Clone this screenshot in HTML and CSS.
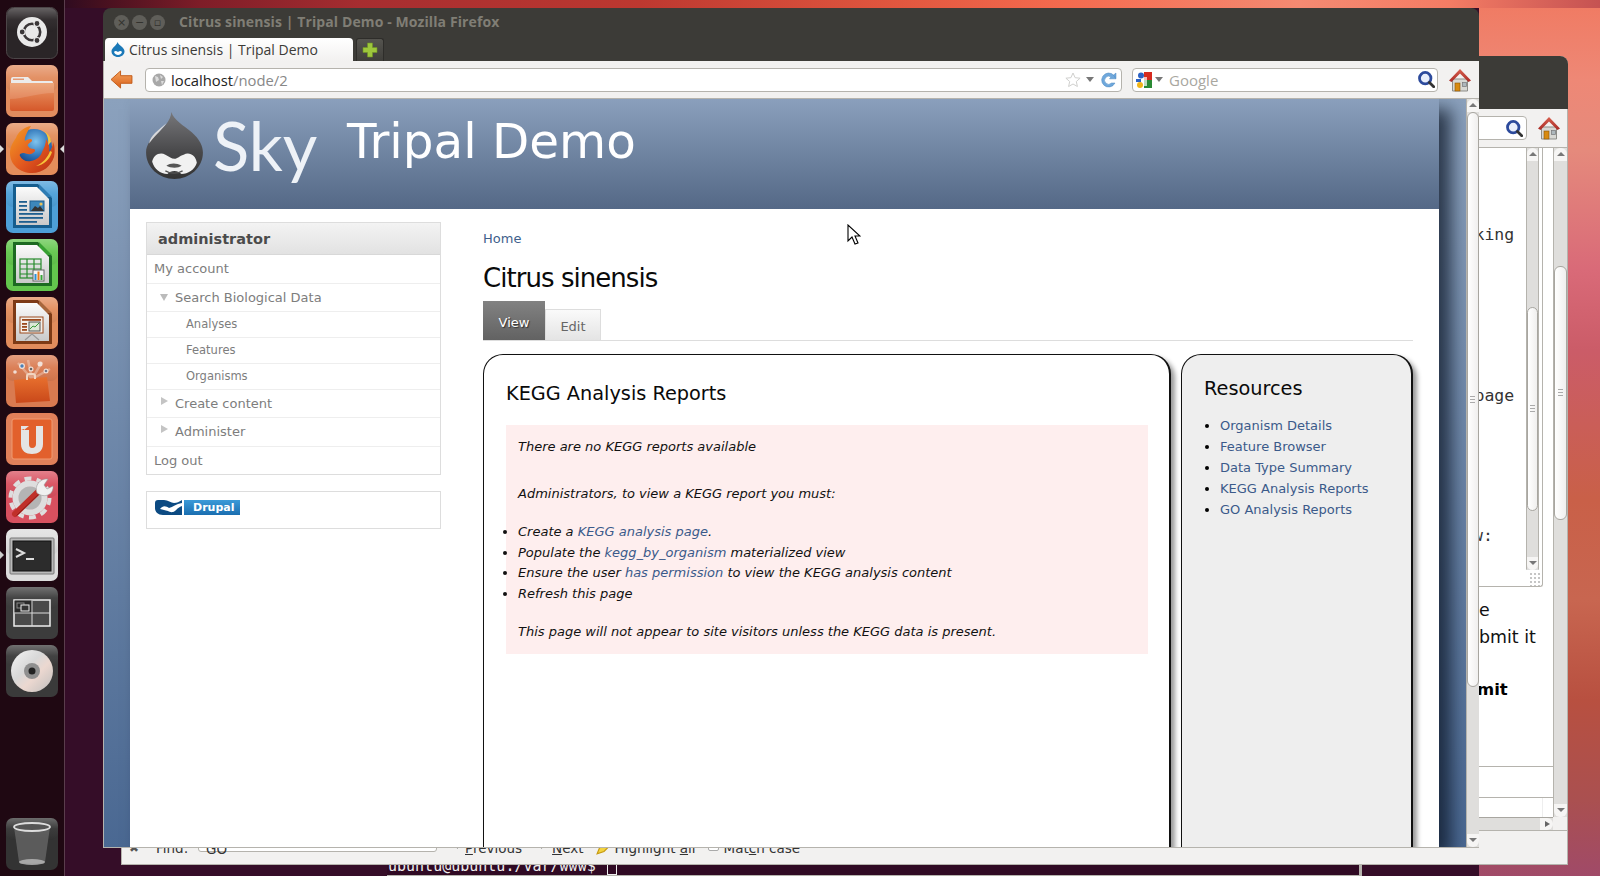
FILE: index.html
```html
<!DOCTYPE html>
<html lang="en">
<head>
<meta charset="utf-8">
<title>Citrus sinensis | Tripal Demo</title>
<link rel="stylesheet" href="styles.css">
</head>
<body>
<svg class="defs" width="0" height="0" aria-hidden="true">
  <defs>
    <linearGradient id="glass" x1="0" y1="0" x2="0" y2="1"><stop offset="0" stop-color="#fff" stop-opacity=".28"/><stop offset=".5" stop-color="#fff" stop-opacity=".04"/><stop offset="1" stop-color="#000" stop-opacity=".06"/></linearGradient>
    <linearGradient id="dropfill" x1="0" y1="0" x2="0" y2="1"><stop offset="0" stop-color="#77777a"/><stop offset=".6" stop-color="#48484a"/><stop offset="1" stop-color="#333"/></linearGradient>
    <radialGradient id="globe" cx=".55" cy=".35" r=".7"><stop offset="0" stop-color="#7fc4ee"/><stop offset=".6" stop-color="#2a6fb4"/><stop offset="1" stop-color="#153c7c"/></radialGradient>
    <linearGradient id="fox" x1="0" y1="0" x2="1" y2="1"><stop offset="0" stop-color="#f4a025"/><stop offset=".55" stop-color="#e2571f"/><stop offset="1" stop-color="#b82c12"/></linearGradient>
    <linearGradient id="folder" x1="0" y1="0" x2="0" y2="1"><stop offset="0" stop-color="#eb9a68"/><stop offset="1" stop-color="#d5582a"/></linearGradient>
    <linearGradient id="page" x1="0" y1="0" x2="0" y2="1"><stop offset="0" stop-color="#fbfbfb"/><stop offset="1" stop-color="#c9c9c9"/></linearGradient>
    <linearGradient id="disc" x1="0" y1="0" x2="1" y2="1"><stop offset="0" stop-color="#f5f5f5"/><stop offset=".4" stop-color="#d8d8d8"/><stop offset=".6" stop-color="#ecd8d0"/><stop offset="1" stop-color="#bdbdbd"/></linearGradient>
    <linearGradient id="arrowfill" x1="0" y1="0" x2="0" y2="1"><stop offset="0" stop-color="#f5a560"/><stop offset="1" stop-color="#d95f18"/></linearGradient>
    <linearGradient id="roof" x1="0" y1="0" x2="0" y2="1"><stop offset="0" stop-color="#d8604f"/><stop offset="1" stop-color="#a82a25"/></linearGradient>
    <linearGradient id="bag" x1="0" y1="0" x2="0" y2="1"><stop offset="0" stop-color="#e8702e"/><stop offset="1" stop-color="#c9481a"/></linearGradient>
    <symbol id="magnifier" viewBox="0 0 16 16">
      <circle cx="6.8" cy="6.8" r="5.4" fill="#e8eefb" stroke="#2c4a9c" stroke-width="2.6"/>
      <path d="M10.8 10.8l4 4" stroke="#333" stroke-width="2.6" stroke-linecap="round"/>
    </symbol>
    <symbol id="home" viewBox="0 0 24 24">
      <path d="M4.5 11h15v12h-15z" fill="#d8d8d4" stroke="#8d8d88"/>
      <path d="M1 12.5L12 1l11 11.5-2.5 1.5L12 5.5 3.500 14z" fill="url(#roof)"/>
      <rect x="7" y="15" width="5" height="8" fill="#d88a10" stroke="#8a5507" stroke-width=".6"/>
      <rect x="14.500" y="14.500" width="4" height="4" fill="#aeb8bd" stroke="#77777a" stroke-width=".7"/>
    </symbol>
  </defs>
</svg>

<nav class="launcher" aria-label="Launcher">
  <div class="tile">
    <svg viewBox="0 0 52 52"><rect x=".5" y=".5" width="51" height="51" rx="7" fill="#2a2527" stroke="#4c4648"/><rect x="1" y="1" width="50" height="24" rx="7" fill="url(#glass)"/><circle cx="26" cy="25" r="15" fill="#e9e9e9"/><circle cx="26" cy="25" r="8.2" fill="none" stroke="#3a3638" stroke-width="2.6"/><g fill="#3a3638" stroke="#e9e9e9" stroke-width="1.2"><circle cx="16.200" cy="25" r="3"/><circle cx="31" cy="16.500" r="3"/><circle cx="31" cy="33.500" r="3"/></g></svg>
  </div>
  <div class="tile">
    <svg viewBox="0 0 52 52"><rect width="52" height="52" rx="7" fill="#e28c5e"/><rect width="52" height="26" rx="7" fill="url(#glass)"/><path d="M5 14a2 2 0 0 1 2-2h15l4 4h20a2 2 0 0 1 1 2v6H5z" fill="#ececec"/><path d="M7 13.500h11v1.500H7z" fill="#e59a75"/><path d="M4 18h44v26a2 2 0 0 1-2 2H6a2 2 0 0 1-2-2z" fill="url(#folder)"/><path d="M4 18h44v10C30 28 18 34 4 34z" fill="#fff" opacity=".14"/></svg>
  </div>
  <div class="tile tile-pip">
    <svg viewBox="0 0 52 52"><rect width="52" height="52" rx="7" fill="#e48d5b"/><rect width="52" height="26" rx="7" fill="url(#glass)"/><circle cx="28" cy="24" r="18" fill="url(#globe)"/><path d="M25 3c-7 1-13 6-15 12-3 4-6 9-6 15 0 12 10 20 22 20 11 0 19-7 22-16 1-5 1-11-1-15 0 4-2 8-4 10 1-4 0-9-3-13 0 5-2 9-4 13-1 4-5 8-11 9-5 1-9-1-11-5-1-2 1-3 4-3 3 1 6 2 9 0 2-1 3-3 1-4-3 0-5-1-6-3-1-1 1-3 3-4 2-1 1-3-1-3-2 0-4 1-5 2-1-3 2-9 6-15z" fill="url(#fox)"/><path d="M38 8c3 3 5 8 4 14l3-3c0-4-2-8-7-11zM44 28c-2 6-7 12-14 15 8-1 14-7 16-14z" fill="#f6c43a"/></svg>
  </div>
  <div class="tile">
    <svg viewBox="0 0 52 52"><rect width="52" height="52" rx="7" fill="#4d9fd8"/><rect width="52" height="26" rx="7" fill="url(#glass)"/><path d="M7 3h25l14 14v30H7z" fill="#155d8e"/><path d="M33 3l13 13H33z" fill="#2f7cb3"/><path d="M10 6h21l12 12v26H10z" fill="url(#page)"/><g fill="#1e5f8f"><rect x="13" y="20" width="8" height="1.800"/><rect x="13" y="24" width="8" height="1.800"/><rect x="13" y="28" width="8" height="1.800"/><rect x="13" y="32" width="24" height="1.800"/><rect x="13" y="36" width="24" height="1.800"/><rect x="13" y="40" width="18" height="1.800"/></g><rect x="24" y="20" width="14" height="10" fill="#3d87bb" stroke="#1e5f8f"/><path d="M25 30l4-5 3 2 2-2 4 5z" fill="#333"/><circle cx="35" cy="23" r="1.600" fill="#e8c25a"/></svg>
  </div>
  <div class="tile">
    <svg viewBox="0 0 52 52"><rect width="52" height="52" rx="7" fill="#63c64d"/><rect width="52" height="26" rx="7" fill="url(#glass)"/><path d="M7 3h25l14 14v30H7z" fill="#1d6a22"/><path d="M33 3l13 13H33z" fill="#37a032"/><path d="M10 6h21l12 12v26H10z" fill="url(#page)"/><g fill="none" stroke="#258a2a" stroke-width="1.200"><rect x="14" y="20" width="21" height="19"/><path d="M14 25h21M14 30h21M14 35h21M21 20v19M28 20v19"/></g><rect x="27" y="31" width="11" height="11" fill="#f4f4f4" stroke="#666"/><rect x="28.500" y="35" width="2" height="6" fill="#2d8fd5"/><rect x="31.500" y="32.500" width="2" height="8.500" fill="#e87a1d"/><rect x="34.500" y="36" width="2" height="5" fill="#3aa63a"/></svg>
  </div>
  <div class="tile">
    <svg viewBox="0 0 52 52"><rect width="52" height="52" rx="7" fill="#e28c5c"/><rect width="52" height="26" rx="7" fill="url(#glass)"/><path d="M7 3h25l14 14v30H7z" fill="#7d3a16"/><path d="M33 3l13 13H33z" fill="#a8673d"/><path d="M10 6h21l12 12v26H10z" fill="url(#page)"/><rect x="14" y="20" width="23" height="16" fill="#f4f0ea" stroke="#9c4a1e"/><rect x="16" y="22" width="19" height="1.800" fill="#9c4a1e"/><g fill="#9c4a1e"><rect x="16" y="26" width="5" height="1.800"/><rect x="16" y="29" width="5" height="1.800"/><rect x="16" y="32" width="5" height="1.800"/></g><rect x="23" y="25" width="11" height="9" fill="#dde8d8" stroke="#555"/><path d="M24 32l3-3 2 1 4-4" fill="none" stroke="#3a9a3a"/><path d="M19 43l7-6 7 6" fill="none" stroke="#999" stroke-width="1.200"/></svg>
  </div>
  <div class="tile">
    <svg viewBox="0 0 52 52"><rect width="52" height="52" rx="7" fill="#d97a50"/><rect width="52" height="26" rx="7" fill="url(#glass)"/><path d="M26 24L12 8M26 24L22 5M26 24l10-17M26 24L44 14" stroke="#fbeee6" stroke-width="2.500" opacity=".35"/><g fill="#f4e9e2" opacity=".9"><circle cx="16" cy="11" r="3"/><circle cx="25" cy="14" r="2.500"/><circle cx="34" cy="9" r="2.500"/><circle cx="40" cy="16" r="2.500"/><circle cx="9" cy="17" r="1.800"/></g><circle cx="16" cy="11" r="1.700" fill="#4a80b8"/><circle cx="25" cy="14" r="1.300" fill="#666"/><circle cx="40" cy="16" r="1.300" fill="#778"/><path d="M8 25l33-3 3 24-34 2z" fill="url(#bag)"/><path d="M21 25v-4q0-2 2-2h4q2 0 2 2v3" fill="none" stroke="#f2d4bf" stroke-width="2"/></svg>
  </div>
  <div class="tile">
    <svg viewBox="0 0 52 52"><rect width="52" height="52" rx="7" fill="#e0805a"/><rect x="6" y="6" width="40" height="40" rx="2" fill="#e2602c" stroke="#f09a70"/><path d="M15 13h8l-5 4v-1l-3 1zM15 17h8v14q0 4 3 4c3 0 4-2 4-4V13h7v18c0 7-5 10-11 10s-11-3-11-10z" fill="#e4e4e4"/></svg>
  </div>
  <div class="tile">
    <svg viewBox="0 0 52 52"><rect width="52" height="52" rx="7" fill="#d8505f"/><rect width="52" height="26" rx="7" fill="url(#glass)"/><circle cx="24" cy="27" r="12" fill="#b4b4b4"/><circle cx="24" cy="27" r="14.500" fill="none" stroke="#dedede" stroke-width="6"/><circle cx="24" cy="27" r="19.500" fill="none" stroke="#dedede" stroke-width="4" stroke-dasharray="7 5.250"/><path d="M9 43L34 19" stroke="#c0302a" stroke-width="6" stroke-linecap="round"/><path d="M9 43L34 19" stroke="#8c1c18" stroke-width="1" transform="translate(1.500 1.500)"/><path d="M31 22c-3-7 3-15 11-14l-4 6 3 4 6-3c1 8-8 13-16 7" fill="#f0f0f0" stroke="#999" stroke-width=".6"/></svg>
  </div>
  <div class="tile tile-arrow">
    <svg viewBox="0 0 52 52"><rect width="52" height="52" rx="7" fill="#dcdcdc"/><rect width="52" height="26" rx="7" fill="url(#glass)"/><rect x="4" y="9" width="44" height="36" rx="1" fill="#b9b9b9" stroke="#777"/><rect x="7" y="12" width="38" height="30" fill="#2c2c2c" stroke="#111"/><path d="M10 20l8 4-8 4" fill="none" stroke="#ddd" stroke-width="2"/><rect x="20" y="29" width="8" height="2" fill="#ddd"/></svg>
  </div>
  <div class="tile">
    <svg viewBox="0 0 52 52"><rect width="52" height="52" rx="7" fill="#3c3c3c"/><rect width="52" height="22" rx="7" fill="url(#glass)"/><rect x="8" y="13" width="36" height="26" fill="#4a4a4a" stroke="#eee" stroke-width="1.500"/><rect x="8.500" y="13.500" width="18" height="13" fill="#2a2a2a"/><path d="M26 13v26M8 26h36" stroke="#ddd"/><rect x="11" y="16" width="7" height="5" fill="none" stroke="#888"/><rect x="15" y="18" width="8" height="6" fill="#333" stroke="#eee"/></svg>
  </div>
  <div class="tile">
    <svg viewBox="0 0 52 52"><rect width="52" height="52" rx="7" fill="#3a3a3a"/><rect width="52" height="22" rx="7" fill="url(#glass)"/><circle cx="26" cy="26" r="21" fill="url(#disc)"/><circle cx="26" cy="26" r="8" fill="#8f8f8f"/><circle cx="26" cy="26" r="3.500" fill="#222"/></svg>
  </div>
  <div class="tile tile-trash">
    <svg viewBox="0 0 52 52"><rect width="52" height="52" rx="7" fill="#333"/><rect width="52" height="22" rx="7" fill="url(#glass)"/><path d="M8 9l5 35c1 2 25 2 26 0l5-35z" fill="#6a6a6a" opacity=".75"/><ellipse cx="26" cy="9" rx="18" ry="4" fill="#555" stroke="#ddd" stroke-width="1.800"/><ellipse cx="26" cy="44" rx="13" ry="3" fill="#bbb" opacity=".8"/></svg>
  </div>
</nav>

<section class="terminal"><span class="term-text">ubuntu@ubuntu:/var/www$ </span><span class="term-cursor"></span></section>

<section class="win back">
  <div class="back-title"></div>
  <div class="toolbar back-toolbar">
    <div class="search back-search"><svg class="mag"><use href="#magnifier"/></svg></div>
    <svg class="home"><use href="#home"/></svg>
  </div>
  <div class="back-main">
    <div class="back-page">
      <div class="textarea">
        <div class="ta-lines">
          <p class="mono mono-king">king</p>
          <p class="mono mono-page">page</p>
          <p class="mono mono-w">w:</p>
        </div>
        <div class="ta-scroll">
          <div class="sb sb-ta">
            <div class="sb-btn up"></div><div class="sb-fill sb-ta-a"></div><div class="sb-thumb sb-ta-t"></div><div class="sb-fill sb-ta-b"></div><div class="sb-btn down"></div>
          </div>
          <div class="grip"></div>
        </div>
      </div>
      <p class="bp bp-e">e</p>
      <p class="bp bp-it">bmit it</p>
      <p class="bp bp-mit">mit</p>
      <div class="back-rule"></div>
      <div class="back-field"><div class="back-field-in"></div></div>
    </div>
    <div class="sb sb-back">
      <div class="sb-btn up"></div><div class="sb-fill sb-back-a"></div><div class="sb-thumb sb-back-t"></div><div class="sb-fill grow"></div><div class="sb-btn down"></div>
    </div>
  </div>
  <div class="hscroll"><div class="h-track"><div class="h-thumb"></div><div class="h-btn"></div></div><div class="h-corner"></div></div>
  <div class="findbar">
    <span class="find-x">✖</span>
    <span class="find-label">Find:</span>
    <span class="find-input">GO</span>
    <span class="find-item find-prev"><u>P</u>revious</span>
    <span class="find-item find-next"><u>N</u>ext</span>
    <svg class="find-hl" viewBox="0 0 14 14"><path d="M1 12l2-5 6-6 4 3-6 6z" fill="#f3d33f" stroke="#c79a10"/></svg>
    <span class="find-item find-all">Highlight <u>a</u>ll</span>
    <span class="find-check"></span>
    <span class="find-item">Mat<u>c</u>h case</span>
  </div>
</section>

<section class="win front">
  <header class="titlebar">
    <div class="wbtns"><span class="wbtn">×</span><span class="wbtn">−</span><span class="wbtn">▫</span></div>
    <span class="wtitle">Citrus sinensis | Tripal Demo - Mozilla Firefox</span>
  </header>
  <div class="tabstrip">
    <div class="tab">
      <svg class="favicon" viewBox="0 0 14 15"><path d="M6.500 0c.5 2 2.500 3 4 4.500 2 1.800 3 3.500 3 5 0 3-3 5.500-6.500 5.500S.5 12.500.5 9.500C.5 5.500 5.500 4 6.500 0z" fill="#1b79b8"/><path d="M3 10c1-1.500 2.500-1 4 0 1.500-1 3-1.500 4 0-.5 2-2.500 3-4 3s-3.500-1-4-3z" fill="#fff"/></svg>
      <span>Citrus sinensis | Tripal Demo</span>
    </div>
    <div class="newtab"><svg viewBox="0 0 16 16"><path d="M5.500 1h5v4.500H15v5h-4.500V15h-5v-4.500H1v-5h4.500z" fill="#9dc63c" stroke="#6f9422" stroke-width=".6"/></svg></div>
  </div>
  <div class="toolbar front-toolbar">
    <svg class="back-arrow" viewBox="0 0 24 20"><path d="M11 1L1 10l10 9v-5h12V6H11z" fill="url(#arrowfill)" stroke="#c25a17"/></svg>
    <div class="urlbar">
      <svg class="globe" viewBox="0 0 14 14"><circle cx="7" cy="7" r="6.500" fill="#a8a8a8"/><path d="M3 3l3 1 1 3-3 2zM8 2l3 2-2 2zM9 8l3 0-2 4z" fill="#dcdcdc"/></svg>
      <span class="url"><b>localhost</b>/node/2</span>
      <svg class="star" viewBox="0 0 16 16"><path d="M8 1l2.100 4.700 5 .5-3.800 3.300 1.100 5L8 12l-4.400 2.500 1.100-5L.9 6.200l5-.5z" fill="#fff" stroke="#d0d0ce"/></svg>
      <span class="dd"></span>
      <svg class="reload" viewBox="0 0 16 16"><path d="M14.500 6.500A7 7 0 1 0 14 11h-3.500A4 4 0 1 1 10 5L8.500 6.800H15V1l-2.500 2" fill="#6fa8dc" stroke="#4d88c0" stroke-width=".5"/></svg>
    </div>
    <div class="search front-search">
      <svg class="gicon" viewBox="0 0 16 16"><rect x="8" y="0" width="8" height="8" fill="#d62b20"/><rect x="8" y="8" width="8" height="8" fill="#2a8a34"/><circle cx="5" cy="3.500" r="3" fill="#2c62c4"/><circle cx="4" cy="13" r="3" fill="#f2b619"/><rect x="0" y="7" width="5" height="3" fill="#2c62c4"/><path d="M8 5h3v9H8z" fill="#fff" opacity=".7"/></svg>
      <span class="dd"></span>
      <span class="gtext">Google</span>
      <svg class="mag"><use href="#magnifier"/></svg>
    </div>
    <svg class="home"><use href="#home"/></svg>
  </div>

  <div class="viewport">
    <div class="bodybg">
      <div class="page">
        <header class="masthead">
          <svg class="droplet" viewBox="0 0 56 66"><path d="M25 0c2 8 12 13 20 20 8 7 11 14 11 20 0 15-13 26-28 26S0 55 0 40C0 23 23 18 25 0z" fill="url(#dropfill)"/><path d="M20 11C12 18 4 23 3 31c4-6 12-13 17-20z" fill="#d8d8da"/><path d="M6 49c1-6 7-10 13-7 4 2 6 4 9 4 3 0 5-3 9-4 6-3 12 1 13 8-2 7-9 11-15 11-3-2-4-3-7-3s-5 1-7 3c-7 0-13-5-15-12z" fill="#f1f1f1"/><path d="M20 53c4-3 10-3 15 0-2 1-4 2-7 2-3 0-6-1-8-2z" fill="#555"/><path d="M19 58c5 3 12 3 17 0" fill="none" stroke="#555" stroke-width="1.200"/></svg>
          <span class="sky">Sky</span>
          <h1 class="sitename">Tripal Demo</h1>
        </header>
        <div class="columns">
          <aside class="sidebar">
            <div class="sidebox">
              <h2 class="sidehead">administrator</h2>
              <ul class="menu">
                <li class="m0">My account</li>
                <li class="m1 open">Search Biological Data</li>
                <li class="m2">Analyses</li>
                <li class="m2">Features</li>
                <li class="m2">Organisms</li>
                <li class="m1 closed">Create content</li>
                <li class="m1 closed">Administer</li>
                <li class="m0 last">Log out</li>
              </ul>
            </div>
            <div class="sidebox powered">
              <div class="badge"><svg viewBox="0 0 27 15"><path d="M0 3q0-3 3-3h6c4 0 7 3 10 3 3 0 5-1 8-3v15H8C3 15 0 12 0 8z" fill="#0c4a82"/><path d="M5 9c3-4 6-3 9-1 4-1 7-4 13-5v3c-3 1-5 3-7 5-3 2-5 1-7 0-3-1-5-1-8-2z" fill="#fff"/></svg><span class="badge-text">Drupal</span></div>
            </div>
          </aside>
          <main class="main">
            <a class="crumb">Home</a>
            <h1 class="title">Citrus sinensis</h1>
            <div class="tabs"><a class="ptab active">View</a><a class="ptab">Edit</a></div>
            <div class="panels">
              <article class="panel panel-main">
                <h2>KEGG Analysis Reports</h2>
                <div class="notice">
                  <p class="n1">There are no KEGG reports available</p>
                  <p class="n2">Administrators, to view a KEGG report you must:</p>
                  <ul class="nlist">
                    <li>Create a <a>KEGG analysis page</a>.</li>
                    <li>Populate the <a>kegg_by_organism</a> materialized view</li>
                    <li>Ensure the user <a>has permission</a> to view the KEGG analysis content</li>
                    <li>Refresh this page</li>
                  </ul>
                  <p class="n3">This page will not appear to site visitors unless the KEGG data is present.</p>
                </div>
              </article>
              <aside class="panel panel-res">
                <h2>Resources</h2>
                <ul class="reslist">
                  <li><a>Organism Details</a></li>
                  <li><a>Feature Browser</a></li>
                  <li><a>Data Type Summary</a></li>
                  <li><a>KEGG Analysis Reports</a></li>
                  <li><a>GO Analysis Reports</a></li>
                </ul>
              </aside>
            </div>
          </main>
        </div>
      </div>
    </div>
    <div class="sb sb-front">
      <div class="sb-btn up"></div><div class="sb-thumb sb-front-t"></div><div class="sb-fill grow"></div><div class="sb-btn down"></div>
    </div>
  </div>
  <svg class="cursor" viewBox="0 0 14 21"><path d="M1 1v16l4-4 3 7 3-1-3-7h5z" fill="#fff" stroke="#000" stroke-width="1.100"/></svg>
</section>
</body>
</html>
```
FILE: styles.css
```css
* { box-sizing: border-box; }
html, body { margin: 0; height: 100%; }
body {
  width: 1600px; height: 876px; overflow: hidden; position: relative;
  font-family: "DejaVu Sans", sans-serif;
  background:
    linear-gradient(90deg, #2f0b20 64px, #45101f 100px, #7e1d28 200px, #a62d30 360px, #bd3830 640px, #e2573f 900px, #f46a4e 1060px, #f58a72 1300px, #f47c64 1450px, #c55252 1600px) 0 0 / 100% 8px no-repeat,
    linear-gradient(180deg, #f07a62 0, #ee8876 80px, #e58a7c 150px, #d96a78 270px, #cb5c68 350px, #c96048 500px, #c86650 600px, #b85040 700px, #aa5050 800px, #a04a68 876px) 1479px 0 / 121px 100% no-repeat,
    #350d28;
}
.defs { position: absolute; }
p, h1, h2, ul { margin: 0; padding: 0; }

/* launcher */
.launcher {
  position: absolute; left: 0; top: 0; bottom: 0; width: 65px;
  background: #1f0812; border-right: 1px solid #5a3d4c;
  display: flex; flex-direction: column; gap: 6px; padding: 7px 0 6px 6px;
}
.tile { width: 52px; height: 52px; flex: none; position: relative; }
.tile svg { display: block; width: 52px; height: 52px; }
.tile-trash { margin-top: auto; }
.tile-pip::before, .tile-pip::after, .tile-arrow::before {
  content: ""; position: absolute; top: 50%; margin-top: -4px;
  border: 4px solid transparent;
}
.tile-pip::before { left: -6px; border-left-color: #ddd; }
.tile-pip::after { right: -6px; border-right-color: #ddd; }
.tile-arrow::before { left: -6px; border-left-color: #ccc; }

/* terminal behind */
.terminal {
  position: absolute; left: 387px; top: 858px; width: 975px; height: 18px;
  background: #300a24; border-right: 3px solid #b5b3ad; border-bottom: 1px solid #b5b3ad;
  color: #eee; font: 15px/16px "DejaVu Sans Mono", monospace;
  padding-left: 1px; white-space: pre;
  display: flex; align-items: flex-start;
}
.term-cursor { width: 10px; height: 17px; border: 1px solid #eee; margin-left: 2px; }

/* windows */
.win { position: absolute; display: flex; flex-direction: column; border-radius: 8px 8px 0 0; }
.toolbar { background: #f2f1f0; display: flex; align-items: center; flex: none; border-bottom: 1px solid #b5b3ad; }

.back { left: 121px; top: 56px; width: 1447px; height: 809px; background: #f2f1f0; border: 1px solid #b5b3ad; border-top: 0; z-index: 1; }
.back-title { height: 53px; background: #3c3b37; flex: none; border-radius: 8px 8px 0 0; margin: 0 -1px; }
.back-toolbar { height: 39px; justify-content: flex-end; padding-right: 6px; gap: 10px; }
.back-search { width: 400px; height: 24px; }
.back-main { height: 669px; display: flex; flex: none; }
.back-page { flex: 1; background: #fff; display: flex; flex-direction: column; padding-left: 1352px; overflow: hidden; }
.textarea { height: 439px; margin-right: 10px; border-right: 1px solid #b5b3ad; border-bottom: 1px solid #b5b3ad; border-radius: 0 0 3px 0; display: flex; flex: none; }
.ta-lines { flex: 1; min-width: 0; }
.mono { font: 16.500px/22px "DejaVu Sans Mono", monospace; color: #333; white-space: nowrap; }
.mono-king { margin-top: 76px; margin-left: .5px; }
.mono-page { margin-top: 139px; margin-left: .5px; }
.mono-w { margin-top: 118px; margin-left: -1px; }
.ta-scroll { width: 16px; display: flex; flex-direction: column; flex: none; }
.grip { height: 14px; margin: 2px 1px 0 3px; background: radial-gradient(circle, #c4c4c4 0.7px, transparent 1px) 0 0 / 4px 4px; }
.sb-ta { width: 13px; height: 422px; flex: none; }
.sb-ta-a { height: 146px; }
.sb-ta-t { height: 204px; }
.sb-ta-b { height: 46px; }
.bp { font: 17.400px/24px "DejaVu Sans", sans-serif; color: #111; white-space: nowrap; }
.bp-e { margin: 11px 0 0 5px; }
.bp-it { margin: 3px 0 0 5px; }
.bp-mit { margin: 29px 0 0 3px; font-weight: bold; font-size: 16.500px; color: #000; }
.back-rule { flex: none; height: 1px; background: #b5b3ad; margin-top: 64px; }
.back-field { flex: none; margin-top: 30px; height: 20px; border-top: 1px solid #b5b3ad; }
.back-field-in { height: 100%; margin-right: 10px; border-right: 1px solid #eee; }
.hscroll { height: 14px; display: flex; flex: none; border-bottom: 1px solid #b5b3ad; }
.h-track { flex: 1; background: #dfdedc; border-top: 1px solid #a8a6a0; display: flex; justify-content: flex-end; }
.h-thumb { flex: 1; }
.h-btn { width: 13px; background: #f6f5f4; border-radius: 0 6px 6px 0; position: relative; }
.h-btn::after { content: ""; position: absolute; left: 5px; top: 3px; border: 3.500px solid transparent; border-left: 5px solid #666; }
.h-corner { width: 14px; background: #f2f1f0; }

.findbar {
  flex: 1; display: flex; align-items: flex-start; font: 13.500px/16px "DejaVu Sans", sans-serif; color: #333;
  padding-top: 9px; overflow: hidden; white-space: nowrap;
}
.findbar u { text-decoration: underline; }
.find-x { margin-left: 7px; width: 27px; font-size: 12px; color: #555; }
.find-label { width: 42px; }
.find-input { width: 239px; height: 28px; margin-top: -16px; padding: 16px 0 0 7px; background: #fff; border: 1px solid #b5b3ad; border-radius: 3px; }
.find-item { margin-left: 28px; position: relative; }
.find-prev::before, .find-next::before { content: ""; position: absolute; left: -11px; top: 3px; border: 3.500px solid transparent; border-left: 0; border-right: 4px solid #888; }
.find-next::before { border-right: 0; border-left: 4px solid #888; }
.find-next { margin-left: 30px; }
.find-hl { width: 16px; height: 16px; margin-left: 12px; flex: none; }
.find-all { margin-left: 3px; }
.find-check { width: 11px; height: 11px; border: 1px solid #aaa; border-radius: 2px; background: #fff; margin-left: 12px; flex: none; }
.find-check + .find-item { margin-left: 5px; }

.front { left: 103px; top: 8px; width: 1376px; height: 840px; background: #3c3b37; z-index: 2; }
.titlebar { height: 28px; flex: none; margin-bottom: 2px; display: flex; align-items: center; padding-left: 11px; }
.wbtns { display: flex; gap: 3px; }
.wbtn { width: 15px; height: 15px; border-radius: 50%; background: #5f5e59; color: #33322e; font: 11px/15px "DejaVu Sans", sans-serif; text-align: center; }
.wtitle { margin-left: 14px; font: 700 14px/20px "Open Sans", sans-serif; letter-spacing: .1px; color: #807e75; white-space: nowrap; }
.tabstrip { height: 23px; flex: none; display: flex; padding-left: 2px; gap: 3px; }
.tab { width: 248px; background: linear-gradient(#fff, #f2f1f0); border-radius: 4px 4px 0 0; display: flex; align-items: center; padding-left: 6px; gap: 4px; font: 14px/20px "Open Sans", sans-serif; color: #3c3b37; }
.favicon { width: 14px; height: 15px; }
.newtab { width: 28px; background: linear-gradient(#55544f, #3f3e3a); border: 1px solid #2e2d2a; border-bottom: 0; border-radius: 3px 3px 0 0; display: flex; align-items: center; justify-content: center; }
.newtab svg { width: 16px; height: 16px; }

.front-toolbar { height: 38px; padding-left: 6px; border-left: 1px solid #b5b3ad; }
.back-arrow { width: 23px; height: 19px; flex: none; }
.urlbar, .search { background: #fff; border: 1px solid #b5b3ad; border-radius: 4px; height: 24px; display: flex; align-items: center; flex: none; }
.urlbar { width: 977px; margin-left: 12px; padding-left: 6px; }
.globe { width: 14px; height: 14px; flex: none; }
.url { font: 14.800px/20px "Open Sans", sans-serif; color: #888; margin-left: 5px; flex: 1; white-space: nowrap; }
.url b { font-weight: 400; color: #222; }
.star { width: 16px; height: 16px; flex: none; }
.dd { width: 0; height: 0; border: 4px solid transparent; border-top: 5px solid #777; border-bottom: 0; flex: none; }
.star + .dd { margin-left: 5px; }
.reload { width: 16px; height: 16px; margin: 0 4px 0 7px; flex: none; }
.front-search { width: 306px; margin-left: 10px; padding-left: 3px; }
.gicon { width: 16px; height: 16px; flex: none; }
.gicon + .dd { margin-left: 3px; }
.gtext { font: 15px/20px "Open Sans", sans-serif; color: #a9a79f; margin-left: 6px; flex: 1; }
.mag { width: 17px; height: 17px; margin-right: 2px; flex: none; }
.back-search { justify-content: flex-end; padding-right: 1px; }
.home { width: 24px; height: 24px; flex: none; }
.front-toolbar .home { margin-left: 10px; }

.viewport { flex: 1; display: flex; min-height: 0; background: #fff; border-left: 1px solid #b5b3ad; border-bottom: 1px solid #b5b3ad; }
.bodybg { flex: 1; min-width: 0; overflow: hidden; padding-left: 26px; background: linear-gradient(180deg, #8ba1bd 0, #7f96b4 20%, #4a6892 100%); }
.page { width: 1309px; height: 100%; background: #fff; box-shadow: 12px 10px 16px rgba(10, 20, 35, .72); display: flex; flex-direction: column; }
.masthead { height: 110px; flex: none; background: linear-gradient(180deg, #8a9fbc, #546886); display: flex; align-items: flex-start; color: #fff; }
.droplet { width: 57px; height: 67px; flex: none; margin: 13px 0 0 16px; }
.sky { font: 400 67px/76px "Lato", sans-serif; color: #eef2f7; margin: 8px 0 0 10px; width: 134px; }
.sitename { font: 400 48.400px/56px "DejaVu Sans", sans-serif; margin-top: 14px; color: #fff; white-space: nowrap; }

.columns { flex: 1; display: flex; padding-left: 16px; min-height: 0; }
.sidebar { width: 295px; flex: none; padding-top: 13px; }
.sidebox { border: 1px solid #ddd; }
.sidehead { height: 32px; background: linear-gradient(#f3f3f3, #e2e2e2); border-bottom: 1px solid #d8d8d8; font: bold 14.500px/32px "DejaVu Sans", sans-serif; color: #4b4b4b; padding-left: 11px; }
.menu { list-style: none; color: #7d7d7d; }
.menu li { border-bottom: 1px solid #eee; position: relative; white-space: nowrap; }
.menu li.last { border-bottom: 0; height: 27px; }
.m0, .m1 { font-size: 13px; height: 28.500px; line-height: 27px; }
.m0 { padding-left: 7px; }
.m1 { padding-left: 28px; }
.m2 { font-size: 11.500px; height: 26px; line-height: 25px; padding-left: 39px; }
.m2 + .m1 { height: 28px; }
.m1::before { content: ""; position: absolute; left: 13px; top: 10px; border: 4px solid transparent; }
.open::before { border-top: 7px solid #bbb; border-bottom: 0; top: 10px; }
.closed::before { border-left: 7px solid #c4c4c4; border-right: 0; top: 7px; left: 14px; }
.powered { margin-top: 16px; height: 38px; padding: 8px 0 0 8px; }
.badge { display: flex; width: 85px; height: 15px; }
.badge svg { width: 27px; height: 15px; flex: none; }
.badge-text { flex: 1; background: linear-gradient(#3b9ad8, #1a6eb0); color: #fff; font: bold 11px/15px "DejaVu Sans", sans-serif; padding-left: 9px; margin-left: 2px; }

.main { width: 930px; margin-left: 42px; flex: none; padding-top: 22px; }
a { color: #3b5a8a; }
.crumb { display: block; font-size: 13px; line-height: 16px; color: #3f5f8c; }
.title { font: 400 26px/34px "DejaVu Sans", sans-serif; color: #0a0a0a; letter-spacing: -.95px; margin-top: 14px; }
.tabs { display: flex; align-items: flex-end; height: 39px; margin-top: 7px; border-bottom: 1px solid #ddd; }
.ptab { display: block; font-size: 13px; text-align: center; }
.ptab.active { width: 62px; height: 39px; line-height: 43px; background: linear-gradient(#828282, #626262); color: #fff; text-shadow: 1px 1px 1px #333; }
.ptab:not(.active) { width: 56px; height: 31px; line-height: 33px; background: linear-gradient(#fafafa, #e4e4e4); color: #666; border: 1px solid #ddd; border-bottom: 0; }
.panels { display: flex; gap: 10px; margin-top: 13px; }
.panel { border: 1.500px solid #111; border-right-width: 2px; border-radius: 20px; box-shadow: 4px 4px 5px #999; min-height: 600px; flex: none; }
.panel h2 { font: 400 19.300px/28px "DejaVu Sans", sans-serif; color: #0a0a0a; white-space: nowrap; }
.panel-main { width: 688px; padding: 25px 21px 0 22px; background: #fff; }
.notice { margin-top: 17px; background: #feeeee; height: 229px; padding: 12px 0 0 12px; font-size: 13px; line-height: 20.500px; font-style: italic; color: #111; }
.n2 { margin-top: 26.500px; }
.nlist { margin-top: 17.500px; }
.n3 { margin-top: 17.500px; }
.panel-res { width: 232px; background: #eee; padding: 20px 0 0 22px; }
.reslist { margin-top: 12px; padding-left: 16px; font-size: 13px; line-height: 21px; }

/* scrollbars */
.sb { display: flex; flex-direction: column; background: #dfdedc; flex: none; }
.sb-front { width: 13px; border-left: 1px solid #b5b3ad; }
.sb-back { width: 14px; border-left: 1px solid #b5b3ad; }
.sb-ta { border-left: 1px solid #b5b3ad; border-right: 1px solid #b5b3ad; border-bottom: 1px solid #ddd; }
.sb-btn { height: 13px; flex: none; background: #f6f5f4; position: relative; border-radius: 6px 6px 0 0; }
.sb-btn.down { border-radius: 0 0 6px 6px; }
.sb-btn::after { content: ""; position: absolute; left: 50%; margin-left: -4px; top: 4px; border: 4px solid transparent; border-top: 0; border-bottom: 4px solid #777; }
.sb-btn.down::after { border-bottom: 0; border-top: 4px solid #777; }
.sb-thumb { flex: none; position: relative; border-radius: 6px; border: 1px solid #a8a6a0; background: linear-gradient(90deg, #fff, #f0efee); }
.sb-thumb::after { content: ""; position: absolute; left: 50%; top: 50%; width: 5px; height: 7px; margin: -4px 0 0 -3px; background: repeating-linear-gradient(180deg, #aaa 0 1px, transparent 1px 3px); }
.sb-fill { flex: none; border-radius: 0 0 6px 6px; }
.sb-fill.grow { flex: 1; }
.sb-front-t { height: 575px; }
.sb-back-a { height: 105px; }
.sb-back-t { height: 254px; }

.cursor { position: absolute; left: 744px; top: 216px; width: 14px; height: 21px; }
```
